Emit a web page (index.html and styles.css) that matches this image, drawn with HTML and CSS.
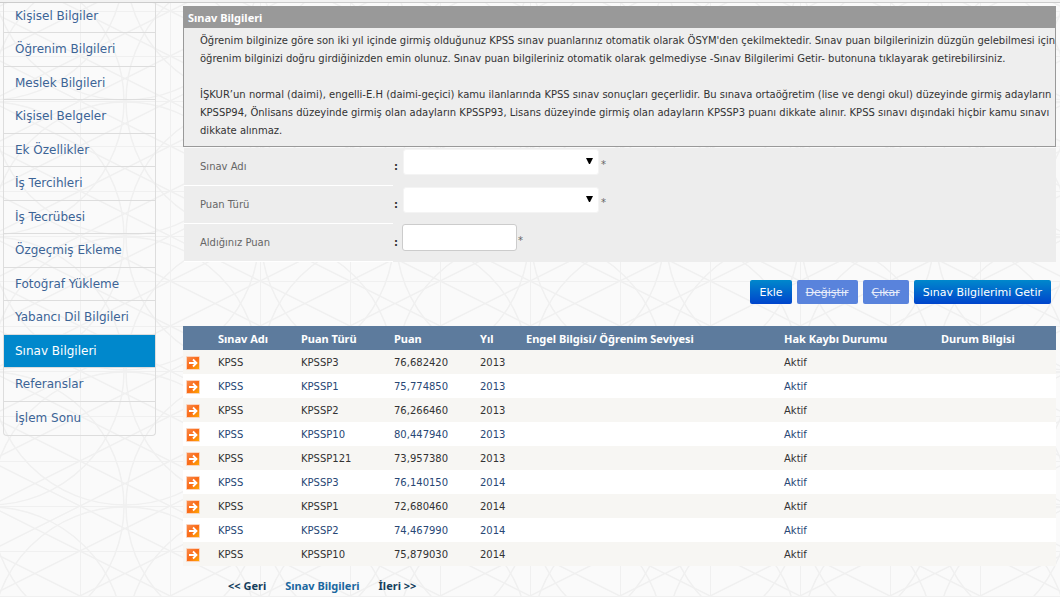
FILE: index.html
```html
<!DOCTYPE html>
<html lang="tr">
<head>
<meta charset="utf-8">
<title>Sınav Bilgileri</title>
<link rel="stylesheet" href="styles.css">
</head>
<body>
<svg class="sprite" aria-hidden="true">
  <defs>
    <linearGradient id="orange" x1="0" y1="0" x2="1" y2="1">
      <stop offset="0" stop-color="#f98a4b"/>
      <stop offset=".5" stop-color="#fa6a17"/>
      <stop offset="1" stop-color="#ffa800"/>
    </linearGradient>
    <symbol id="go" viewBox="0 0 14 14">
      <rect width="14" height="14" rx="1" fill="#fbd3bd"/>
      <rect x="1" y="1" width="12" height="12" fill="url(#orange)"/>
      <path d="M3 7H10M7 3.5L10.5 7L7 10.5" fill="none" stroke="#fff" stroke-width="1.8"/>
    </symbol>
  </defs>
</svg>
<header class="topbar"></header>
<div class="layout">
  <nav class="menu">
    <a href="#">Kişisel Bilgiler</a>
    <a href="#">Öğrenim Bilgileri</a>
    <a href="#">Meslek Bilgileri</a>
    <a href="#">Kişisel Belgeler</a>
    <a href="#">Ek Özellikler</a>
    <a href="#">İş Tercihleri</a>
    <a href="#">İş Tecrübesi</a>
    <a href="#">Özgeçmiş Ekleme</a>
    <a href="#">Fotoğraf Yükleme</a>
    <a href="#">Yabancı Dil Bilgileri</a>
    <a href="#" class="active" aria-current="page">Sınav Bilgileri</a>
    <a href="#">Referanslar</a>
    <a href="#">İşlem Sonu</a>
  </nav>
  <main class="content">
    <section class="panel">
      <h1>Sınav Bilgileri</h1>
      <div class="panel-text">
        <p>Öğrenim bilginize göre son iki yıl içinde girmiş olduğunuz KPSS sınav puanlarınız otomatik olarak ÖSYM'den çekilmektedir. Sınav puan bilgilerinizin düzgün gelebilmesi için<br>öğrenim bilginizi doğru girdiğinizden emin olunuz. Sınav puan bilgileriniz otomatik olarak gelmediyse -Sınav Bilgilerimi Getir- butonuna tıklayarak getirebilirsiniz.</p>
        <p>İŞKUR’un normal (daimi), engelli-E.H (daimi-geçici) kamu ilanlarında KPSS sınav sonuçları geçerlidir. Bu sınava ortaöğretim (lise ve dengi okul) düzeyinde girmiş adayların<br>KPSSP94, Önlisans düzeyinde girmiş olan adayların KPSSP93, Lisans düzeyinde girmiş olan adayların KPSSP3 puanı dikkate alınır. KPSS sınavı dışındaki hiçbir kamu sınavı<br>dikkate alınmaz.</p>
      </div>
    </section>
    <form class="form">
      <div class="row">
        <label for="exam">Sınav Adı</label><span class="colon">:</span>
        <select id="exam"><option></option></select><span class="req">*</span>
      </div>
      <div class="row">
        <label for="type">Puan Türü</label><span class="colon">:</span>
        <select id="type"><option></option></select><span class="req">*</span>
      </div>
      <div class="row">
        <label for="score">Aldığınız Puan</label><span class="colon">:</span>
        <input id="score" type="text"><span class="req">*</span>
      </div>
    </form>
    <div class="actions">
      <button type="button">Ekle</button>
      <button type="button" disabled>Değiştir</button>
      <button type="button" disabled>Çıkar</button>
      <button type="button">Sınav Bilgilerimi Getir</button>
    </div>
    <table class="grid">
      <colgroup><col class="c-icon"><col class="c-exam"><col class="c-type"><col class="c-score"><col class="c-year"><col class="c-level"><col class="c-right"><col></colgroup>
      <thead>
        <tr><th></th><th>Sınav Adı</th><th>Puan Türü</th><th>Puan</th><th>Yıl</th><th>Engel Bilgisi/ Öğrenim Seviyesi</th><th>Hak Kaybı Durumu</th><th>Durum Bilgisi</th></tr>
      </thead>
      <tbody>
        <tr><td><svg><use href="#go"/></svg></td><td>KPSS</td><td>KPSSP3</td><td>76,682420</td><td>2013</td><td></td><td>Aktif</td><td></td></tr>
        <tr><td><svg><use href="#go"/></svg></td><td>KPSS</td><td>KPSSP1</td><td>75,774850</td><td>2013</td><td></td><td>Aktif</td><td></td></tr>
        <tr><td><svg><use href="#go"/></svg></td><td>KPSS</td><td>KPSSP2</td><td>76,266460</td><td>2013</td><td></td><td>Aktif</td><td></td></tr>
        <tr><td><svg><use href="#go"/></svg></td><td>KPSS</td><td>KPSSP10</td><td>80,447940</td><td>2013</td><td></td><td>Aktif</td><td></td></tr>
        <tr><td><svg><use href="#go"/></svg></td><td>KPSS</td><td>KPSSP121</td><td>73,957380</td><td>2013</td><td></td><td>Aktif</td><td></td></tr>
        <tr><td><svg><use href="#go"/></svg></td><td>KPSS</td><td>KPSSP3</td><td>76,140150</td><td>2014</td><td></td><td>Aktif</td><td></td></tr>
        <tr><td><svg><use href="#go"/></svg></td><td>KPSS</td><td>KPSSP1</td><td>72,680460</td><td>2014</td><td></td><td>Aktif</td><td></td></tr>
        <tr><td><svg><use href="#go"/></svg></td><td>KPSS</td><td>KPSSP2</td><td>74,467990</td><td>2014</td><td></td><td>Aktif</td><td></td></tr>
        <tr><td><svg><use href="#go"/></svg></td><td>KPSS</td><td>KPSSP10</td><td>75,879030</td><td>2014</td><td></td><td>Aktif</td><td></td></tr>
      </tbody>
    </table>
    <div class="pager">
      <a href="#">&lt;&lt; Geri</a>
      <a href="#" class="current">Sınav Bilgileri</a>
      <a href="#">İleri &gt;&gt;</a>
    </div>
  </main>
</div>
</body>
</html>
```
FILE: styles.css
```css
* { box-sizing: border-box; }
body {
  margin: 0;
  font: 10px/18px Verdana, "DejaVu Sans", sans-serif;
  color: #333;
  background: #fafafa url("data:image/svg+xml,%3Csvg xmlns='http://www.w3.org/2000/svg' width='270' height='135'%3E%3Cg fill='none' stroke='%23f0f0f0' stroke-width='1.5'%3E%3Cpath stroke-width='1' d='M45.5 0V135M135.5 0V135M225.5 0V135M0 .5H270M0 45.5H270M0 90.5H270'/%3E%3Cpath d='M0 -112.5L270 22.5M0 -67.5L270 67.5M0 -22.5L270 112.5M0 22.5L270 157.5M0 67.5L270 202.5M0 112.5L270 247.5M0 22.5L270 -112.5M0 67.5L270 -67.5M0 112.5L270 -22.5M0 157.5L270 22.5M0 202.5L270 67.5M0 247.5L270 112.5'/%3E%3Ccircle r='134'/%3E%3Ccircle cx='135' r='134'/%3E%3Ccircle cx='270' r='134'/%3E%3Ccircle cy='135' r='134'/%3E%3Ccircle cx='135' cy='135' r='134'/%3E%3Ccircle cx='270' cy='135' r='134'/%3E%3C/g%3E%3C/svg%3E") 125px 101px;
}
.sprite { position: absolute; width: 0; height: 0; }
.topbar { height: 3px; background: #f2f2f2; border-bottom: 1px solid #ccc; }
.layout { display: flex; align-items: flex-start; gap: 27px; padding: 0 4px 0 3px; }

.menu {
  flex: 0 0 153px;
  border: 1px solid #ddd;
  border-top: 0;
  border-radius: 0 0 4px 4px;
  font-size: 12px;
}
.menu a {
  display: flex;
  align-items: center;
  height: 33px;
  padding: 0 0 1px 11px;
  border-bottom: 1px solid #ddd;
  color: #3c6496;
  text-decoration: none;
}
.menu a:nth-child(even) { height: 34px; }
.menu a:first-child { height: 30px; padding-bottom: 3px; }
.menu a:last-child { border-bottom: 0; }
.menu .active { background: #08c; color: #fff; }

.content { flex: 1; min-width: 0; padding-top: 3px; }
.panel { border: 1px solid #999; background: #eee; }
.panel h1 {
  margin: 0;
  padding: 2px 4px 1px;
  font: bold 11px/18px "Noto Sans", sans-serif;
  background: #999;
  color: #fff;
}
.panel-text { padding: 4px 0 6px 16px; white-space: nowrap; }
.panel-text p { margin: 0; }
.panel-text p + p { margin-top: 18px; }

.form { margin: 1px 0 0 1px; background: #ededed; color: #666; }
.row { display: flex; height: 38px; }
.row label {
  flex: 0 0 209px;
  padding: 10px 0 0 16px;
  border-bottom: 1px solid #fff;
}
.colon { flex: 0 0 9px; padding: 10px 0 0 1px; font-weight: bold; color: #333; }
.row select {
  appearance: none;
  width: 196px;
  height: 26px;
  margin: 1px 2px 0 1px;
  border: 1px solid #f4f4f4;
  border-radius: 3px;
  background: #fff url("data:image/svg+xml,%3Csvg xmlns='http://www.w3.org/2000/svg' width='7' height='6'%3E%3Cpath d='M0 0H7L4 6H3Z'/%3E%3C/svg%3E") no-repeat right 5px top 8px;
}
.row input {
  width: 115px;
  height: 27px;
  margin-right: 1px;
  border: 1px solid #ccc;
  border-radius: 3px;
  background: #fff;
}
.req { padding-top: 8px; }

.actions { display: flex; justify-content: flex-end; gap: 5px; padding: 18px 5px 22px 0; }
.actions button {
  height: 24px;
  padding: 0 9px;
  border: 0;
  border-radius: 2px;
  font: 11px "DejaVu Sans", sans-serif;
  color: #fff;
  background: linear-gradient(#08c, #04c);
}
.actions button:disabled { background: #5983dc; color: #e8edfa; text-decoration: line-through; }

.grid { width: 100%; table-layout: fixed; border-collapse: collapse; }
.c-icon { width: 35px; }
.c-exam { width: 83px; }
.c-type { width: 93px; }
.c-score { width: 86px; }
.c-year { width: 46px; }
.c-level { width: 258px; }
.c-right { width: 157px; }
.grid th, .grid td { height: 24px; padding: 2px 0 0; text-align: left; white-space: nowrap; }
.grid th { background: #5d7b9d; color: #fff; font: bold 11px/18px "Noto Sans", sans-serif; }
.grid tbody tr { background: #fff; color: #284775; }
.grid tbody tr:nth-child(odd) { background: #f7f6f3; color: #333; }
.grid svg { display: block; width: 14px; height: 14px; margin-left: 3px; }

.pager {
  display: flex;
  gap: 19px;
  padding: 11px 0 0 45px;
  font: bold 11px/18px "Noto Sans", sans-serif;
}
.pager a { color: #153e5c; text-decoration: none; }
.pager .current { color: #1b68a0; }
```
